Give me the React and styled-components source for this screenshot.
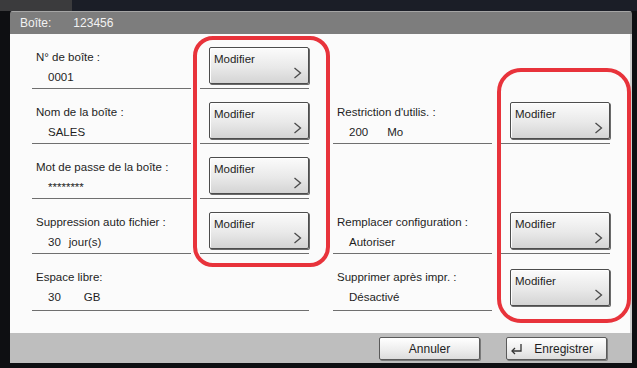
import React from "react";
import styled, { createGlobalStyle } from "styled-components";

const GlobalStyle = createGlobalStyle`
  html, body {
    margin: 0;
    padding: 0;
    background: #0e0f12;
  }
  body {
    font-family: "Liberation Sans", Arial, sans-serif;
  }
`;

// value: list of [text, gap before it]
const leftRows = [
  { label: "N° de boîte :", value: [["0001", 0]] },
  { label: "Nom de la boîte :", value: [["SALES", 0]] },
  { label: "Mot de passe de la boîte :", value: [["********", 0]] },
  { label: "Suppression auto fichier :", value: [["30", 0], ["jour(s)", 8]] },
  { label: "Espace libre:", value: [["30", 0], ["GB", 23]], noButton: true, last: true },
];

const rightRows = [
  { empty: true },
  { label: "Restriction d'utilis. :", value: [["200", 0], ["Mo", 19]] },
  { empty: true },
  { label: "Remplacer configuration :", value: [["Autoriser", 0]] },
  { label: "Supprimer après impr. :", value: [["Désactivé", 0]], last: true, noCellLine: true },
];

const Chevron = () => (
  <svg width="9" height="12" viewBox="0 0 9 12">
    <polyline points="1.5,1 7.5,6 1.5,11" fill="none" stroke="#4a4a4a" strokeWidth="1.3" />
  </svg>
);

const ReturnIcon = () => (
  <svg width="13" height="12" viewBox="0 0 13 12">
    <path d="M11 1 V8 H2" fill="none" stroke="#333" strokeWidth="1.3" />
    <path d="M5 5 L2 8 L5 11" fill="none" stroke="#333" strokeWidth="1.3" />
  </svg>
);

const Row = ({ row }) => {
  if (row.empty) return <RowWrap $last={row.last} />;
  return (
    <RowWrap $last={row.last}>
      <InfoCell>
        <Label>{row.label}</Label>
        <Value>
          {row.value.map(([v, gap], i) => (
            <ValuePart key={i} $gap={gap}>
              {v}
            </ValuePart>
          ))}
        </Value>
      </InfoCell>
      {!row.noButton && (
        <ButtonCell $noLine={row.noCellLine}>
          <ModifyButton>
            <span>Modifier</span>
            <ChevronBox>
              <Chevron />
            </ChevronBox>
          </ModifyButton>
        </ButtonCell>
      )}
    </RowWrap>
  );
};

const App = () => {
  return (
    <>
      <GlobalStyle />
      <Screen>
        <TopStrip>
          <TopTab />
        </TopStrip>
        <Window>
          <TitleBar>
            <span>Boîte:</span>
            <span>123456</span>
          </TitleBar>
          <Body>
            <Column>
              {leftRows.map((r, i) => (
                <Row key={i} row={r} />
              ))}
            </Column>
            <Column>
              {rightRows.map((r, i) => (
                <Row key={i} row={r} />
              ))}
            </Column>
            <Highlight $left={183} $top={2} $width={129} $height={223} $radius={20} />
            <Highlight $left={487} $top={34} $width={126} $height={247} $radius={24} />
          </Body>
          <Footer>
            <FooterButton>Annuler</FooterButton>
            <FooterButton $icon>
              <ReturnIcon />
              <span>Enregistrer</span>
            </FooterButton>
          </Footer>
        </Window>
      </Screen>
    </>
  );
};

export default App;

const Screen = styled.div`
  width: 637px;
  height: 368px;
  background: #0e0f12;
  display: flex;
  flex-direction: column;
  overflow: hidden;
`;

const TopStrip = styled.div`
  height: 11px;
  background: #1b1e27;
  display: flex;
`;

const TopTab = styled.div`
  width: 72px;
  background: #3b3b3d;
`;

const Window = styled.div`
  margin-left: 10px;
  width: 622px;
  height: 352px;
  display: flex;
  flex-direction: column;
  border-radius: 3px 3px 0 0;
  overflow: hidden;
`;

const TitleBar = styled.div`
  height: 23px;
  background: #7d7d7d;
  border-top: 1px solid #a5a5a5;
  box-sizing: border-box;
  display: flex;
  align-items: center;
  gap: 22px;
  padding-left: 10px;
  color: #f2f2f2;
  font-size: 12px;
`;

const Body = styled.div`
  position: relative;
  height: 299px;
  background: #fbfbfb;
  padding: 0 22px;
  display: grid;
  grid-template-columns: 277px 277px;
  column-gap: 24px;
  align-content: start;
  border-right: 2px solid #cfcfcf;
`;

const Column = styled.div`
  display: flex;
  flex-direction: column;
`;

const RowWrap = styled.div`
  height: ${(p) => (p.$last ? 57 : 55)}px;
  display: flex;
  gap: 9px;
`;

const InfoCell = styled.div`
  flex: 1;
  border-bottom: 1px solid #6f6f6f;
  padding: 15px 0 0 4px;
  color: #1e1e1e;
  font-size: 11.5px;
`;

const Label = styled.div`
  height: 17px;
  line-height: 17px;
`;

const Value = styled.div`
  margin-top: 3px;
  padding-left: 12px;
  height: 17px;
  line-height: 17px;
  display: flex;
`;

const ValuePart = styled.span`
  margin-left: ${(p) => p.$gap}px;
`;

const ButtonCell = styled.div`
  width: 109px;
  border-bottom: 1px solid ${(p) => (p.$noLine ? "transparent" : "#6f6f6f")};
  display: flex;
  justify-content: flex-end;
  align-items: flex-end;
  padding-bottom: 4px;
`;

const ModifyButton = styled.div`
  position: relative;
  width: 100px;
  height: 37px;
  box-sizing: border-box;
  border: 1px solid #4d4d4d;
  border-radius: 2px;
  background: linear-gradient(#fbfbfb, #e9e9e9 55%, #d4d4d4);
  box-shadow: 1px 1px 0 #6a6a6a, inset 1px 1px 0 #ffffff;
  font-size: 11.5px;
  color: #1e1e1e;
  padding: 5px 0 0 4px;
`;

const ChevronBox = styled.div`
  position: absolute;
  right: 6px;
  bottom: 4px;
  display: flex;
`;

const Highlight = styled.div`
  position: absolute;
  left: ${(p) => p.$left}px;
  top: ${(p) => p.$top}px;
  width: ${(p) => p.$width}px;
  height: ${(p) => p.$height}px;
  border: 4px solid #e8333b;
  border-radius: ${(p) => p.$radius}px;
  pointer-events: none;
`;

const Footer = styled.div`
  height: 30px;
  background: #bebebe;
  display: flex;
  justify-content: flex-end;
  align-items: flex-start;
  gap: 26px;
  padding: 4px 25px 0 0;
  box-sizing: border-box;
`;

const FooterButton = styled.div`
  width: 101px;
  height: 23px;
  box-sizing: border-box;
  border: 1px solid #5a5a5a;
  border-radius: 2px;
  background: linear-gradient(#ffffff, #ececec 60%, #dcdcdc);
  box-shadow: 1px 1px 0 #7a7a7a;
  display: flex;
  align-items: center;
  justify-content: ${(p) => (p.$icon ? "space-between" : "center")};
  padding: ${(p) => (p.$icon ? "0 13px 0 3px" : "0")};
  font-size: 12px;
  color: #1e1e1e;
`;
